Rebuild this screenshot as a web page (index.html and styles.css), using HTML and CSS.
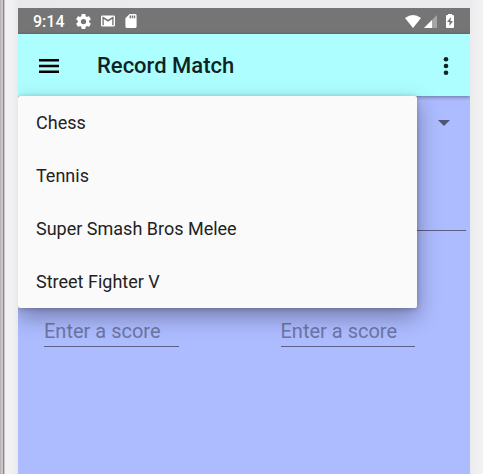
FILE: index.html
```html
<!DOCTYPE html>
<html lang="en">
<head>
<meta charset="utf-8">
<meta name="viewport" content="width=device-width, initial-scale=1">
<title>Record Match</title>
<link rel="stylesheet" href="styles.css">
</head>
<body>
<div class="screen">
  <div class="status">
    <span class="clock">9:14</span>
    <svg class="icon" viewBox="2 2 20 20" width="15" height="15" aria-hidden="true"><path d="M19.43 12.98c.04-.32.07-.64.07-.98s-.03-.66-.07-.98l2.11-1.65a.5.5 0 0 0 .12-.64l-2-3.46a.5.5 0 0 0-.61-.22l-2.49 1a7.3 7.3 0 0 0-1.69-.98l-.38-2.65A.49.49 0 0 0 14 2h-4a.49.49 0 0 0-.49.42l-.38 2.65c-.61.25-1.17.59-1.69.98l-2.49-1a.49.49 0 0 0-.61.22l-2 3.46a.49.49 0 0 0 .12.64l2.11 1.65a8 8 0 0 0 0 1.96l-2.11 1.65a.5.5 0 0 0-.12.64l2 3.46c.12.22.39.3.61.22l2.49-1c.52.4 1.08.73 1.69.98l.38 2.65c.03.24.24.42.49.42h4c.25 0 .46-.18.49-.42l.38-2.65a7.3 7.3 0 0 0 1.69-.98l2.49 1c.23.09.49 0 .61-.22l2-3.46a.5.5 0 0 0-.12-.64zM12 15.500a3.500 3.500 0 1 1 0-7 3.500 3.500 0 0 1 0 7z"/></svg>
    <svg class="icon" viewBox="2 4 20 16" width="14" height="12" aria-hidden="true"><path d="M20 4H4a2 2 0 0 0-2 2v12c0 1.100.9 2 2 2h16a2 2 0 0 0 2-2V6a2 2 0 0 0-2-2zm0 14h-2V9.250L12 13 6 9.250V18H4V6h1.200l6.800 4.250L18.800 6H20z"/></svg>
    <svg class="icon" viewBox="4 2 16 20" width="12" height="14" aria-hidden="true"><path d="M18 2h-8L4 8v12c0 1.100.9 2 2 2h12a2 2 0 0 0 2-2V4a2 2 0 0 0-2-2zm-6 6h-2V4h2zm3 0h-2V4h2zm3 0h-2V4h2z"/></svg>
    <div class="signals">
      <svg class="icon" viewBox="0 0 16 13" width="16" height="13" aria-hidden="true"><path d="M0 3Q8-3 16 3L8 13z"/></svg>
      <svg class="icon" viewBox="0 0 13 13" width="13" height="13" aria-hidden="true"><path d="M13 0v13H0z" opacity=".35"/><path d="M8 5v8H0z"/></svg>
      <svg class="icon battery" viewBox="0 0 8 14" width="8" height="14" aria-hidden="true"><path d="M2 0h4v1h1q1 0 1 1v11q0 1-1 1H1q-1 0-1-1V2q0-1 1-1h1z"/><path class="bolt" d="M5 3 1 8h2.500v4L7 7H4.500z"/></svg>
    </div>
  </div>
  <header class="appbar">
    <button class="icon-button" type="button" aria-label="Open navigation">
      <svg viewBox="0 0 20 14" width="20" height="14"><path d="M0 0h20v2.400H0zM0 5.800h20v2.400H0zM0 11.600h20v2.400H0z"/></svg>
    </button>
    <h1 class="title">Record Match</h1>
    <button class="icon-button more" type="button" aria-label="More options">
      <svg viewBox="0 0 6 18" width="6" height="18"><circle cx="3" cy="2.300" r="2.300"/><circle cx="3" cy="9" r="2.300"/><circle cx="3" cy="15.700" r="2.300"/></svg>
    </button>
  </header>
  <main class="content">
    <button class="spinner" type="button" aria-label="Game" aria-haspopup="listbox" aria-expanded="true">
      <svg viewBox="0 0 12 6" width="12" height="6"><path d="M0 0h12L6 6z"/></svg>
    </button>
    <input class="field opponent" type="text" aria-label="Opponent">
    <div class="scores">
      <input class="field score" type="text" placeholder="Enter a score" aria-label="Your score">
      <input class="field score" type="text" placeholder="Enter a score" aria-label="Opponent score">
    </div>
    <div class="menu" role="listbox" aria-label="Game">
      <button class="option" type="button" role="option">Chess</button>
      <button class="option" type="button" role="option">Tennis</button>
      <button class="option" type="button" role="option">Super Smash Bros Melee</button>
      <button class="option" type="button" role="option">Street Fighter V</button>
    </div>
  </main>
</div>
</body>
</html>
```
FILE: styles.css
```css
* {
  box-sizing: border-box;
}

body {
  margin: 0;
  min-height: 100vh;
  display: flex;
  padding: 8px 13px 0 18px;
  font-family: Roboto, sans-serif;
  background: linear-gradient(90deg, #b9b2b4 0 1px, #cbc5c7 1px 3px, #8f888a 3px 4px, #cbc5c7 4px 5px, #f1f1f4 5px 12px, #e9e9eb 18px, #ececee 50%, #ebebed 470px, #f3f3f4 100%);
}

button {
  border: 0;
  padding: 0;
  background: none;
  font: inherit;
  color: inherit;
}

svg {
  display: block;
}

.screen {
  flex: 1;
  min-width: 0;
  display: flex;
  flex-direction: column;
  overflow: hidden;
  background: #adbbff;
}

.status {
  display: flex;
  align-items: center;
  gap: 10px;
  height: 26px;
  padding: 0 16px 0 15px;
  color: #fff;
  background: #757575;
}

.icon {
  fill: currentColor;
}

.clock {
  margin-right: 1px;
  font-size: 16px;
  font-weight: 500;
}

.signals {
  display: flex;
  align-items: center;
  gap: 3px;
  margin-left: auto;
}

.battery {
  margin-left: 6px;
}

.bolt {
  fill: #757575;
}

.appbar {
  position: relative;
  display: flex;
  align-items: center;
  height: 62px;
  padding: 2px 14px 0 16px;
  color: #102323;
  background: #adffff;
  box-shadow: 0 1px 4px rgba(0, 0, 0, 0.4);
}

.icon-button {
  display: grid;
  place-items: center;
  width: 30px;
  height: 40px;
  fill: #000;
}

.title {
  margin: 0 0 0 33px;
  font-size: 22px;
  font-weight: 500;
  line-height: 28px;
}

.more {
  width: 20px;
  margin-left: auto;
  fill: #102323;
}

.content {
  position: relative;
  flex: 1;
}

.spinner {
  display: flex;
  align-items: center;
  justify-content: flex-end;
  width: 100%;
  height: 54px;
  padding-right: 20px;
  fill: #4f5675;
}

.field {
  display: block;
  min-width: 0;
  height: 34px;
  border: 0;
  border-bottom: 1px solid #5b6086;
  border-radius: 0;
  padding: 2px 0 0;
  outline: 0;
  font: 20px/24px Roboto, sans-serif;
  color: #222;
  background: none;
}

.field::placeholder {
  color: #6c76a3;
  opacity: 1;
}

.opponent {
  width: calc(100% - 8px);
  margin: 47px 4px 0;
}

.scores {
  display: grid;
  grid-template-columns: 1fr 1fr;
  gap: 102px;
  margin: 82px 55px 0 26px;
}

.menu {
  position: absolute;
  top: 0;
  left: 0;
  width: calc(100% - 53px);
  border-radius: 2px;
  background: #fafafa;
  box-shadow: 0 8px 22px rgba(0, 0, 0, 0.35), 0 1px 5px rgba(0, 0, 0, 0.2);
}

.option {
  display: block;
  width: 100%;
  height: 53px;
  padding: 0 18px;
  font-size: 18px;
  text-align: left;
  color: #222;
}
```
